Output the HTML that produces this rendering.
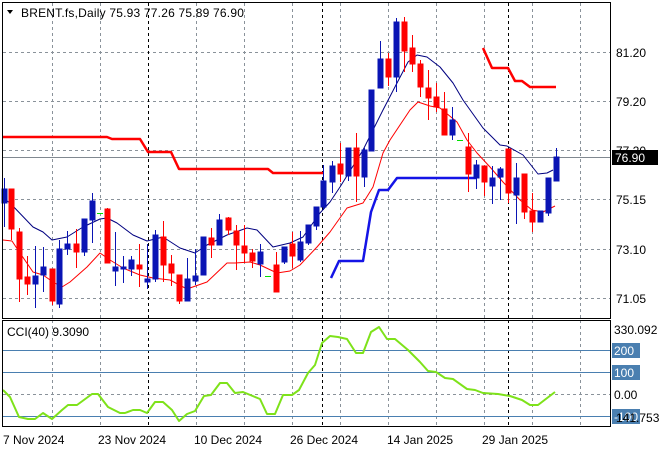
<!DOCTYPE html>
<html><head><meta charset="utf-8"><style>
body{margin:0;background:#fff;}
svg{display:block;font-family:"Liberation Sans",sans-serif;font-size:12px;}
</style></head><body>
<svg width="660" height="450" viewBox="0 0 660 450" xmlns="http://www.w3.org/2000/svg">
<rect width="660" height="450" fill="#fff"/>
<g stroke="#8a929a" stroke-dasharray="3,3" stroke-width="1">
<path d="M52.5 3V318M100.5 3V318M196.5 3V318M244.5 3V318M292.5 3V318M340.5 3V318M388.5 3V318M436.5 3V318M484.5 3V318M532.5 3V318M580.5 3V318"/>
<path d="M3 52.5H610M3 101.5H610M3 150.5H610M3 199.5H610M3 249.5H610M3 298.5H610"/>
<path d="M52.5 320V426M100.5 320V426M196.5 320V426M244.5 320V426M292.5 320V426M340.5 320V426M388.5 320V426M436.5 320V426M484.5 320V426M532.5 320V426M580.5 320V426"/>
<path d="M3 394.5H610"/>
</g>
<g stroke="#000" stroke-dasharray="3,3"><path d="M148.5 3V318M322.5 3V318M508.5 3V318M148.5 320V426M322.5 320V426M508.5 320V426"/></g>
<path d="M3 157.5H610" stroke="#808890"/>
<g fill="none" stroke-linejoin="round">
<path d="M3 137H107L112 139H140L148 152H171L179 169H268L273 173H323" stroke="#f00" stroke-width="2.5"/>
<path d="M483 48L492 68H508L515 81H522L530 87H556" stroke="#f00" stroke-width="2.5"/>
<path d="M331 278L339 261H363L371 212L379 190H388L397 178H477" stroke="#1414e6" stroke-width="2.5"/>
<path d="M3 198L10 203L33 227L43 232L52 240L67 237L83 227L100 219L107 218L117 223L133 235L147 241L163 237L180 248L195 253L207 245L227 235L247 228L257 230L273 247L290 243L303 237L320 213L330 202L340 187L363 150L383 110L397 83L408 62L417 55L427 57L440 67L453 83L463 100L483 128L500 145L507 146L523 155L538 174L547 173L553 170" stroke="#000080" stroke-width="1"/>
<path d="M3 240L12 241L20 253L33 272L43 275L53 282L62 287L70 282L87 267L100 253L110 260L123 268L140 275L153 278L170 280L187 289L207 282L227 263L235 263L250 262L260 265L277 273L290 271L300 265L317 247L330 232L347 208L363 203L373 187L383 153L390 140L410 110L418 102L430 106L440 108L457 122L467 140L477 153L490 167L503 182L520 200L532 210L543 212L555 206" stroke="#f00" stroke-width="1"/>
</g>
<g stroke-width="1">
<g fill="#0a14b4" stroke="#0a14b4">
<path d="M4.5 178V227M35.5 246V308M43.5 247V292M59.5 240V308M67.5 231V255M84.5 219V256M92.5 193V243M115.5 232V286M123.5 256V283M131.5 256V276M147.5 244V289M155.5 230V282M187.5 258V301M195.5 249V285M203.5 237V275M219.5 214V245M260.5 244V277M284.5 247V264M300.5 231V262M308.5 225V245M316.5 207V230M323.5 165V210M332.5 161V193M348.5 148V181M364.5 148V187M371.5 90V151M380.5 41V88M396.5 18V92M452.5 107V140M476.5 160V189M492.5 166V204M500.5 167V200M516.5 163V224M540.5 211V222M548.5 178V216M556.5 148V181"/>
<rect x="2" y="189" width="5" height="14"/><rect x="33" y="276" width="5" height="8"/><rect x="41" y="267" width="5" height="8"/><rect x="57" y="249" width="5" height="55"/><rect x="65" y="244" width="5" height="5"/><rect x="82" y="219" width="5" height="33"/><rect x="90" y="201" width="5" height="19"/><rect x="113" y="267" width="5" height="4"/><rect x="121" y="267" width="5" height="2"/><rect x="129" y="260" width="5" height="9"/><rect x="145" y="279" width="5" height="3"/><rect x="153" y="235" width="5" height="44"/><rect x="185" y="279" width="5" height="22"/><rect x="193" y="276" width="5" height="5"/><rect x="201" y="237" width="5" height="38"/><rect x="217" y="220" width="5" height="25"/><rect x="258" y="252" width="5" height="12"/><rect x="282" y="247" width="5" height="15"/><rect x="298" y="242" width="5" height="18"/><rect x="306" y="225" width="5" height="18"/><rect x="314" y="207" width="5" height="19"/><rect x="321" y="181" width="5" height="26"/><rect x="330" y="166" width="5" height="16"/><rect x="346" y="148" width="5" height="28"/><rect x="362" y="150" width="5" height="27"/><rect x="369" y="90" width="5" height="61"/><rect x="378" y="59" width="5" height="29"/><rect x="394" y="22" width="5" height="55"/><rect x="450" y="120" width="5" height="15"/><rect x="474" y="165" width="5" height="13"/><rect x="490" y="178" width="5" height="8"/><rect x="498" y="169" width="5" height="8"/><rect x="514" y="178" width="5" height="17"/><rect x="538" y="211" width="5" height="11"/><rect x="546" y="178" width="5" height="35"/><rect x="554" y="157" width="5" height="24"/>
</g>
<g fill="#f00" stroke="#f00">
<path d="M11.5 189V240M19.5 228V302M27.5 256V295M52.5 269V305M76.5 229V268M107.5 208V263M139.5 244V287M163.5 221V282M171.5 255V286M179.5 275V304M211.5 228V258M228.5 217V235M236.5 225V270M244.5 225V263M252.5 249V268M276.5 252V292M292.5 232V268M340.5 143V182M356.5 133V202M388.5 53V86M404.5 17V72M412.5 35V72M420.5 60V97M428.5 70V120M436.5 83V112M444.5 92V135M468.5 133V192M484.5 166V196M508.5 149V203M524.5 174V219M532.5 193V232"/>
<rect x="9" y="189" width="5" height="40"/><rect x="17" y="232" width="5" height="47"/><rect x="25" y="277" width="5" height="7"/><rect x="50" y="269" width="5" height="32"/><rect x="74" y="244" width="5" height="8"/><rect x="105" y="209" width="5" height="54"/><rect x="137" y="265" width="5" height="4"/><rect x="161" y="237" width="5" height="28"/><rect x="169" y="264" width="5" height="9"/><rect x="177" y="275" width="5" height="26"/><rect x="209" y="238" width="5" height="7"/><rect x="226" y="218" width="5" height="12"/><rect x="234" y="231" width="5" height="14"/><rect x="242" y="246" width="5" height="7"/><rect x="250" y="253" width="5" height="8"/><rect x="274" y="265" width="5" height="27"/><rect x="290" y="244" width="5" height="12"/><rect x="338" y="164" width="5" height="10"/><rect x="354" y="148" width="5" height="28"/><rect x="386" y="59" width="5" height="18"/><rect x="402" y="22" width="5" height="29"/><rect x="410" y="48" width="5" height="16"/><rect x="418" y="64" width="5" height="23"/><rect x="426" y="88" width="5" height="10"/><rect x="434" y="97" width="5" height="10"/><rect x="442" y="109" width="5" height="26"/><rect x="466" y="147" width="5" height="27"/><rect x="482" y="166" width="5" height="16"/><rect x="506" y="149" width="5" height="44"/><rect x="522" y="174" width="5" height="38"/><rect x="530" y="211" width="5" height="11"/>
</g>
<path d="M97 213.5H103M265 276.5H271M457 140.5H463" stroke="#00e000"/>
</g>
<rect x="2.5" y="2.5" width="608" height="316" fill="none" stroke="#000"/>
<path d="M7 10H13L10 14Z" fill="#000"/>
<text x="21" y="17" fill="#000" letter-spacing="0.2">BRENT.fs,Daily  75.93 77.26 75.89 76.90</text>
<g fill="#000">
<text x="616" y="57">81.20</text><text x="616" y="106">79.20</text><text x="616" y="155">77.20</text><text x="616" y="204">75.15</text><text x="616" y="254">73.10</text><text x="616" y="303">71.05</text>
</g>
<rect x="612" y="150" width="46" height="15" fill="#000"/>
<text x="615" y="162" fill="#fff">76.90</text>
<path d="M3 350.5H610M3 372.5H610M3 416.5H610" stroke="#4a7fb0"/>
<path d="M3 390L10 397L19 417L28 419L35 419L43 413L52 419L62 410L68 405L77 405L92 394L98 394L108 407L120 413L125 413L133 410L140 410L147 413L155 402L163 402L172 410L179 421L187 414L195 411L204 396L211 395L220 383L227 383L235 393L243 392L260 399L267 414L275 414L283 395L292 395L299 390L308 373L315 365L322 343L330 336L338 337L347 339L356 353L363 353L371 332L379 327L387 339L395 339L408 350L420 362L428 371L436 372L445 378L453 379L467 389L475 390L483 393L498 394L510 396L522 400L530 405L538 405L555 392" fill="none" stroke="#7ee21a" stroke-width="2" stroke-linejoin="round"/>
<rect x="2.5" y="320.5" width="608" height="106" fill="none" stroke="#000"/>
<text x="7" y="336" fill="#000">CCI(40) 9.3090</text>
<text x="614" y="334" fill="#000">330.092</text>
<rect x="612" y="343" width="28" height="15" fill="#4a7fb0"/><text x="614" y="355" fill="#fff">200</text>
<rect x="612" y="365" width="28" height="15" fill="#4a7fb0"/><text x="614" y="377" fill="#fff">100</text>
<text x="614" y="399" fill="#000">0.00</text>
<rect x="612" y="409" width="28" height="15" fill="#4a7fb0"/><text x="614" y="421" fill="#fff">-100</text>
<text x="616" y="422" fill="#000">141.753</text>
<g fill="#000">
<text x="3" y="444">7 Nov 2024</text><text x="98" y="444">23 Nov 2024</text><text x="194" y="444">10 Dec 2024</text><text x="290" y="444">26 Dec 2024</text><text x="387" y="444">14 Jan 2025</text><text x="482" y="444">29 Jan 2025</text>
</g>
</svg>
</body></html>
